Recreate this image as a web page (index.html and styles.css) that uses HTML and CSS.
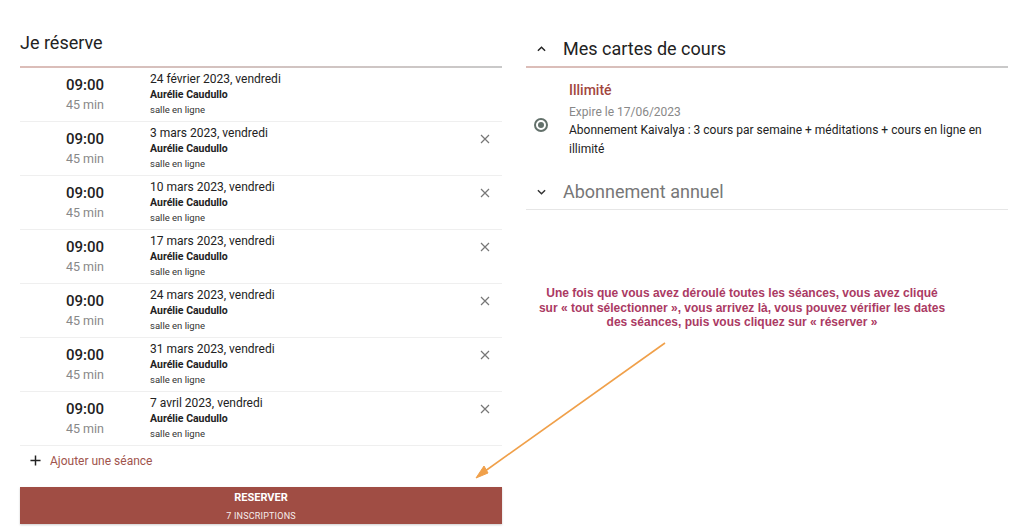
FILE: index.html
```html
<!DOCTYPE html>
<html lang="fr">
<head>
<meta charset="utf-8">
<title>Je réserve</title>
<link rel="stylesheet" href="styles.css">
</head>
<body>
<div class="page">
  <section class="left">
    <h2 class="title">Je réserve</h2>
    <div class="sessions">
      <div class="session">
        <div class="time"><div class="hour">09:00</div><div class="dur">45 min</div></div>
        <div class="info"><div class="date">24 février 2023, vendredi</div><div class="teacher">Aurélie Caudullo</div><div class="room">salle en ligne</div></div>
      </div>
      <div class="session">
        <div class="time"><div class="hour">09:00</div><div class="dur">45 min</div></div>
        <div class="info"><div class="date">3 mars 2023, vendredi</div><div class="teacher">Aurélie Caudullo</div><div class="room">salle en ligne</div></div>
        <svg class="close" viewBox="0 0 10 10"><path d="M1 1L9 9M9 1L1 9"/></svg>
      </div>
      <div class="session">
        <div class="time"><div class="hour">09:00</div><div class="dur">45 min</div></div>
        <div class="info"><div class="date">10 mars 2023, vendredi</div><div class="teacher">Aurélie Caudullo</div><div class="room">salle en ligne</div></div>
        <svg class="close" viewBox="0 0 10 10"><path d="M1 1L9 9M9 1L1 9"/></svg>
      </div>
      <div class="session">
        <div class="time"><div class="hour">09:00</div><div class="dur">45 min</div></div>
        <div class="info"><div class="date">17 mars 2023, vendredi</div><div class="teacher">Aurélie Caudullo</div><div class="room">salle en ligne</div></div>
        <svg class="close" viewBox="0 0 10 10"><path d="M1 1L9 9M9 1L1 9"/></svg>
      </div>
      <div class="session">
        <div class="time"><div class="hour">09:00</div><div class="dur">45 min</div></div>
        <div class="info"><div class="date">24 mars 2023, vendredi</div><div class="teacher">Aurélie Caudullo</div><div class="room">salle en ligne</div></div>
        <svg class="close" viewBox="0 0 10 10"><path d="M1 1L9 9M9 1L1 9"/></svg>
      </div>
      <div class="session">
        <div class="time"><div class="hour">09:00</div><div class="dur">45 min</div></div>
        <div class="info"><div class="date">31 mars 2023, vendredi</div><div class="teacher">Aurélie Caudullo</div><div class="room">salle en ligne</div></div>
        <svg class="close" viewBox="0 0 10 10"><path d="M1 1L9 9M9 1L1 9"/></svg>
      </div>
      <div class="session">
        <div class="time"><div class="hour">09:00</div><div class="dur">45 min</div></div>
        <div class="info"><div class="date">7 avril 2023, vendredi</div><div class="teacher">Aurélie Caudullo</div><div class="room">salle en ligne</div></div>
        <svg class="close" viewBox="0 0 10 10"><path d="M1 1L9 9M9 1L1 9"/></svg>
      </div>
    </div>
    <div class="add">
      <svg class="plus" viewBox="0 0 12 12"><path d="M6 0.5V11.5M0.5 6H11.5"/></svg>
      <span>Ajouter une séance</span>
    </div>
    <button class="reserve"><span class="r1">RESERVER</span><span class="r2">7 INSCRIPTIONS</span></button>
  </section>

  <section class="right">
    <div class="acc-head open">
      <svg class="chev" viewBox="0 0 10 6"><path d="M1 5L5 1L9 5"/></svg>
      <h2>Mes cartes de cours</h2>
    </div>
    <div class="card">
      <div class="radio"><span></span></div>
      <div class="card-body">
        <div class="card-name">Illimité</div>
        <div class="card-exp">Expire le 17/06/2023</div>
        <div class="card-desc">Abonnement Kaivalya : 3 cours par semaine + méditations + cours en ligne en illimité</div>
      </div>
    </div>
    <div class="acc-head closed">
      <svg class="chev" viewBox="0 0 10 6"><path d="M1 1L5 5L9 1"/></svg>
      <h2>Abonnement annuel</h2>
    </div>
  </section>
</div>

<p class="note">Une fois que vous avez déroulé toutes les séances, vous avez cliqué<br>sur « tout sélectionner », vous arrivez là, vous pouvez vérifier les dates<br>des séances, puis vous cliquez sur « réserver »</p>
<svg class="arrow" viewBox="0 0 1024 529" width="1024" height="529">
  <path d="M665 343L481 474" />
  <path class="head" d="M476 478L484 466L488 473Z"/>
</svg>
</body>
</html>
```

FILE: styles.css
```css
* { box-sizing: border-box; }
html, body { margin: 0; padding: 0; background: #fff; }
body {
  font-family: Roboto, "Noto Sans", sans-serif;
  color: #222;
  width: 1024px;
  height: 529px;
  overflow: hidden;
  position: relative;
}
.page {
  display: flex;
  gap: 24px;
  padding-left: 20px;
}
.left, .right { width: 482px; }

.title {
  margin: 0;
  padding: 32px 0 12px;
  font-size: 18px;
  line-height: 22px;
  font-weight: 400;
  color: #222;
  border-bottom: 2px solid transparent;
  border-image: linear-gradient(90deg, #dcbdb8, #c9c9c9) 1;
}

.session {
  display: flex;
  align-items: flex-start;
  height: 54px;
  border-bottom: 1px solid #efefef;
  position: relative;
}
.time {
  width: 130px;
  text-align: center;
  padding-top: 7px;
}
.hour { font-size: 15px; line-height: 20px; font-weight: 500; color: #222; }
.dur { font-size: 12.5px; line-height: 20px; color: #888; }
.info { padding-top: 3px; }
.date { font-size: 12px; line-height: 16px; color: #222; }
.teacher { font-size: 10.5px; line-height: 16px; font-weight: 700; color: #222; }
.room { font-size: 9.5px; line-height: 14px; color: #333; }
.close {
  position: absolute;
  right: 12px;
  top: 12px;
  width: 10px;
  height: 10px;
  fill: none;
  stroke: #777;
  stroke-width: 1.2;
}

.add {
  display: flex;
  align-items: center;
  height: 29px;
  padding-left: 10px;
  gap: 9px;
}
.plus { width: 11px; height: 11px; fill: none; stroke: #222; stroke-width: 1.6; }
.add span { font-size: 12px; color: #a0544c; }

.reserve {
  display: flex;
  flex-direction: column;
  align-items: center;
  width: 482px;
  height: 37px;
  margin-top: 12px;
  border: 0;
  padding: 4px 0 0;
  background: #a04d44;
  color: #fff;
  font-family: Roboto, "Noto Sans", sans-serif;
  box-shadow: 0 1px 2px rgba(0,0,0,0.2);
}
.r1 { font-size: 11px; line-height: 14px; font-weight: 700; }
.r2 { font-size: 9px; line-height: 12px; margin-top: 5px; letter-spacing: 0.2px; opacity: 0.9; }

.acc-head {
  display: flex;
  align-items: center;
  gap: 17px;
  padding-left: 11px;
}
.acc-head h2 { margin: 0; font-size: 18px; line-height: 22px; font-weight: 400; }
.acc-head .chev { width: 9px; height: 6px; fill: none; stroke: #222; stroke-width: 1.6; }
.acc-head.open {
  padding-top: 38px;
  padding-bottom: 6px;
  border-bottom: 2px solid transparent;
  border-image: linear-gradient(90deg, #dcbdb8, #c9c9c9) 1;
}
.acc-head.open h2 { color: #222; }
.acc-head.closed {
  padding-top: 22px;
  padding-bottom: 6px;
  border-bottom: 1px solid #e6e6e6;
}
.acc-head.closed h2 { color: #777; }
.acc-head.closed .chev { stroke: #333; }

.card {
  display: flex;
  align-items: center;
  padding: 14px 10px 0 8px;
  gap: 21px;
}
.radio {
  width: 14px;
  height: 14px;
  border-radius: 50%;
  border: 2px solid #63716b;
  display: flex;
  align-items: center;
  justify-content: center;
  flex: none;
  margin-top: 8px;
}
.radio span { width: 6px; height: 6px; border-radius: 50%; background: #63716b; }
.card-name { font-size: 14px; line-height: 16px; font-weight: 500; color: #a2463e; }
.card-exp { font-size: 12px; line-height: 15px; color: #888; margin-top: 7px; }
.card-desc { font-size: 12px; line-height: 19px; color: #222; margin-top: 1px; }

.note {
  position: absolute;
  left: 517px;
  top: 286px;
  width: 450px;
  margin: 0;
  text-align: center;
  font-family: "Liberation Sans", Arial, sans-serif;
  font-weight: 700;
  font-size: 12px;
  line-height: 14.5px;
  color: #ab3a63;
}
.arrow {
  position: absolute;
  left: 0;
  top: 0;
  pointer-events: none;
}
.arrow path { stroke: #f0a04a; stroke-width: 1.6; fill: none; }
.arrow path.head { fill: #f0a04a; stroke: #f0a04a; stroke-width: 1; }
```
